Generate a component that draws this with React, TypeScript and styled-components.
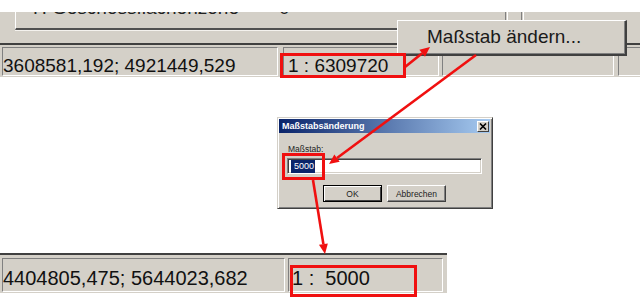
import React from 'react';
import styled, { createGlobalStyle } from 'styled-components';

const GRAY = '#d4d0c8';
const RED = '#f01010';

const GlobalStyle = createGlobalStyle`
  html, body {
    margin: 0;
    padding: 0;
    background: #fff;
  }
  body {
    overflow: hidden;
  }
`;

const Page = styled.div`
  position: relative;
  width: 640px;
  height: 301px;
  overflow: hidden;
  background: #fff;
  display: flex;
  flex-direction: column;
  font-family: 'Liberation Sans', Arial, sans-serif;
  color: #000;
`;

/* ---------- upper screenshot ---------- */

const TopShot = styled.div`
  height: 77px;
  flex: none;
  display: flex;
  flex-direction: column;
  background: ${GRAY};
`;

const Blank = styled.div`
  height: 12px;
  background: #fff;
`;

const Tray = styled.div`
  height: 31px;
  display: flex;
  flex-direction: column;
`;

const TrayRow = styled.div`
  display: flex;
  align-items: flex-start;
  height: 18px;
`;

const ListPanel = styled.div`
  box-sizing: border-box;
  margin-left: 15px;
  width: 385px;
  height: 18px;
  border-left: 1px solid #fff;
  border-bottom: 2px solid #505050;
  overflow: hidden;
  display: flex;
  gap: 40px;
  padding-left: 17px;
  font-size: 19px;
  line-height: 19px;
  color: #222;
`;

const ClippedLine = styled.span`
  margin-top: -14px;
  white-space: pre;
`;

const Groove = styled.div<{ $ml: number }>`
  width: 1px;
  height: 8px;
  margin-left: ${(p) => p.$ml}px;
  border-left: 1px solid #808080;
  border-right: 1px solid #fff;
`;

const Underline = styled.div`
  margin-left: 15px;
  width: 385px;
  height: 1px;
  background: #f4f2ee;
`;

const StatusBar = styled.div<{ $w?: number; $h: number; $pt: number }>`
  box-sizing: border-box;
  width: ${(p) => (p.$w ? `${p.$w}px` : '100%')};
  height: ${(p) => p.$h}px;
  flex: none;
  background: ${GRAY};
  border-top: 2px solid #404040;
  padding: ${(p) => p.$pt}px 0 0 2px;
  display: flex;
  align-items: flex-start;
`;

const Pane = styled.div<{ $w: number; $h: number; $fs: number; $pt: number; $pl: number; $gap: number }>`
  box-sizing: border-box;
  width: ${(p) => p.$w}px;
  height: ${(p) => p.$h}px;
  margin-right: ${(p) => p.$gap}px;
  flex: none;
  border-top: 1px solid #808080;
  border-left: 1px solid #808080;
  border-right: 1px solid #fff;
  border-bottom: 1px solid #fff;
  padding: ${(p) => p.$pt}px 0 0 ${(p) => p.$pl}px;
  font-size: ${(p) => p.$fs}px;
  line-height: ${(p) => p.$fs}px;
  white-space: pre;
  color: #111;
  overflow: hidden;
`;

const PopupButton = styled.div`
  position: absolute;
  left: 397px;
  top: 20px;
  width: 230px;
  height: 36px;
  box-sizing: border-box;
  background: ${GRAY};
  border-top: 1px solid #fff;
  border-left: 1px solid #fff;
  border-right: 2px solid #404040;
  border-bottom: 2px solid #404040;
  box-shadow: inset -1px -1px 0 #808080;
  padding: 6px 0 0 29px;
  font-size: 19px;
  line-height: 19px;
  color: #1a1a1a;
  white-space: nowrap;
`;

/* ---------- dialog ---------- */

const Middle = styled.div`
  height: 176px;
  flex: none;
  padding: 40px 0 0 277px;
  box-sizing: border-box;
`;

const Dialog = styled.div`
  width: 216px;
  height: 92px;
  box-sizing: border-box;
  background: ${GRAY};
  border: 1px solid;
  border-color: ${GRAY} #404040 #404040 ${GRAY};
  box-shadow: inset 1px 1px 0 #fff, inset -1px -1px 0 #808080;
  padding: 1px 2px 2px 1px;
  display: flex;
  flex-direction: column;
  font-size: 8.5px;
`;

const TitleBar = styled.div`
  height: 14px;
  flex: none;
  display: flex;
  align-items: center;
  justify-content: space-between;
  padding: 0 1px 0 3px;
  background: linear-gradient(to right, #0a246a, #a6caf0);
  color: #fff;
  font-weight: bold;
  font-size: 9px;
`;

const CloseBox = styled.div`
  width: 12px;
  height: 11px;
  box-sizing: border-box;
  background: ${GRAY};
  border: 1px solid;
  border-color: #fff #404040 #404040 #fff;
  display: flex;
  align-items: center;
  justify-content: center;
`;

const DialogBody = styled.div`
  padding: 11px 0 0 8px;
  display: flex;
  flex-direction: column;
`;

const Label = styled.div`
  margin-left: 1px;
  line-height: 10px;
  color: #222;
`;

const Field = styled.div`
  margin-top: 4px;
  width: 195px;
  height: 16px;
  box-sizing: border-box;
  background: #fff;
  border: 1px solid;
  border-color: #808080 #fff #fff #808080;
  box-shadow: inset 1px 1px 0 #404040, inset -1px -1px 0 ${GRAY};
  padding: 1px 0 0 3px;
  display: flex;
`;

const Selection = styled.span`
  background: #0a246a;
  color: #fff;
  font-size: 9px;
  line-height: 12px;
  padding: 0 1px 0 3px;
`;

const ButtonRow = styled.div`
  margin-top: 11px;
  display: flex;
  justify-content: center;
  gap: 5px;
  margin-left: -8px;
`;

const DlgButton = styled.div<{ $default?: boolean }>`
  width: 59px;
  height: 17px;
  box-sizing: border-box;
  background: ${GRAY};
  border: 1px solid;
  border-color: ${(p) => (p.$default ? '#000' : '#fff #404040 #404040 #fff')};
  box-shadow: ${(p) =>
    p.$default ? 'inset 1px 1px 0 #fff, inset -1px -1px 0 #404040' : 'inset -1px -1px 0 #808080'};
  display: flex;
  align-items: center;
  justify-content: center;
  color: #222;
`;

/* ---------- annotations ---------- */

const Mark = styled.div<{ $x: number; $y: number; $w: number; $h: number }>`
  position: absolute;
  left: ${(p) => p.$x}px;
  top: ${(p) => p.$y}px;
  width: ${(p) => p.$w}px;
  height: ${(p) => p.$h}px;
  box-sizing: border-box;
  border: 3px solid ${RED};
  pointer-events: none;
`;

const Overlay = styled.svg`
  position: absolute;
  left: 0;
  top: 0;
  pointer-events: none;
`;

const Arrow: React.FC<{ x1: number; y1: number; x2: number; y2: number }> = ({ x1, y1, x2, y2 }) => {
  const dx = x2 - x1;
  const dy = y2 - y1;
  const len = Math.hypot(dx, dy);
  const ux = dx / len;
  const uy = dy / len;
  const hl = 10;
  const hw = 4.5;
  const bx = x2 - ux * hl;
  const by = y2 - uy * hl;
  const pts = `${x2},${y2} ${bx - uy * hw},${by + ux * hw} ${bx + uy * hw},${by - ux * hw}`;
  return (
    <g>
      <line x1={x1} y1={y1} x2={bx} y2={by} stroke={RED} strokeWidth={2.6} />
      <polygon points={pts} fill={RED} />
    </g>
  );
};

export default function App() {
  return (
    <Page>
      <GlobalStyle />
      <TopShot>
        <Blank />
        <Tray>
          <TrayRow>
            <ListPanel>
              <ClippedLine>Π Geschossflächenzone</ClippedLine>
              <ClippedLine>0</ClippedLine>
            </ListPanel>
            <Groove $ml={105} />
            <Groove $ml={13} />
          </TrayRow>
          <Underline />
        </Tray>
        <StatusBar $h={34} $pt={2}>
          <Pane $w={276} $h={29} $fs={19} $pt={8} $pl={0} $gap={5}>
            3608581,192; 4921449,529
          </Pane>
          <Pane $w={156} $h={29} $fs={19} $pt={8} $pl={4} $gap={3}>
            1 : 6309720
          </Pane>
          <Pane $w={172} $h={29} $fs={19} $pt={8} $pl={4} $gap={4}>
            {' '}
          </Pane>
          <Pane $w={40} $h={29} $fs={19} $pt={8} $pl={4} $gap={0}>
            {' '}
          </Pane>
        </StatusBar>
      </TopShot>

      <Middle>
        <Dialog>
          <TitleBar>
            <span>Maßstabsänderung</span>
            <CloseBox>
              <svg width="8" height="7" viewBox="0 0 8 7">
                <path d="M1 0.5 L7 6.5 M7 0.5 L1 6.5" stroke="#000" strokeWidth="1.6" />
              </svg>
            </CloseBox>
          </TitleBar>
          <DialogBody>
            <Label>Maßstab:</Label>
            <Field>
              <Selection>5000</Selection>
            </Field>
            <ButtonRow>
              <DlgButton $default>OK</DlgButton>
              <DlgButton>Abbrechen</DlgButton>
            </ButtonRow>
          </DialogBody>
        </Dialog>
      </Middle>

      <StatusBar $w={447} $h={40} $pt={3}>
        <Pane $w={283} $h={34} $fs={20} $pt={9} $pl={0} $gap={3}>
          4404805,475; 5644023,682
        </Pane>
        <Pane $w={155} $h={34} $fs={20} $pt={9} $pl={3} $gap={0}>
          {'1 :  5000'}
        </Pane>
      </StatusBar>

      <PopupButton>Maßstab ändern...</PopupButton>

      <Mark $x={280} $y={53} $w={126} $h={25} />
      <Mark $x={282} $y={153} $w={43} $h={27} />
      <Mark $x={290} $y={265} $w={127} $h={32} />

      <Overlay width={640} height={301}>
        <Arrow x1={405} y1={67} x2={430} y2={47} />
        <Arrow x1={476} y1={55} x2={329} y2={164} />
        <Arrow x1={313} y1={180} x2={325} y2={254} />
      </Overlay>
    </Page>
  );
}
